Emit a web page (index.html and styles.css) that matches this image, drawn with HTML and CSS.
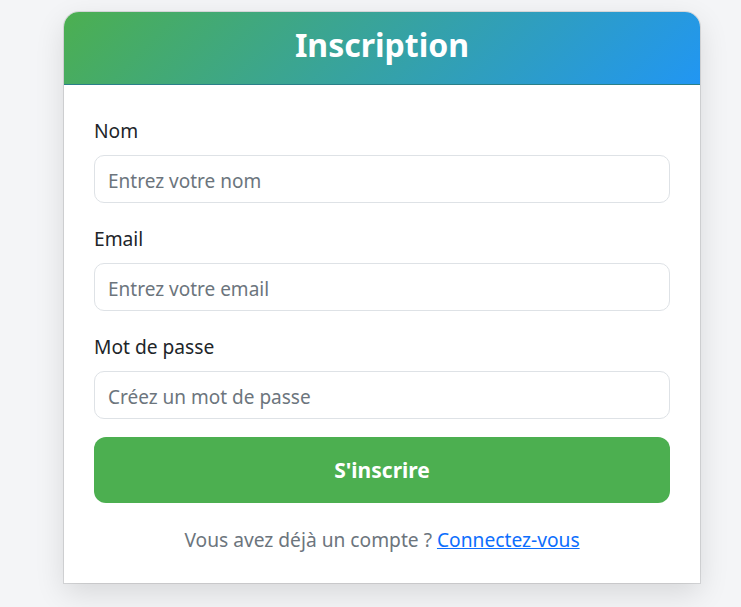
FILE: index.html
```html
<!DOCTYPE html>
<html lang="fr">
<head>
<meta charset="utf-8">
<title>Inscription</title>
<link rel="stylesheet" href="styles.css">
</head>
<body>
<div class="card">
  <div class="card-header">
    <h1 class="title">Inscription</h1>
  </div>
  <form class="card-body">
    <div class="group">
      <label class="label" for="nom">Nom</label>
      <input class="input" id="nom" type="text" placeholder="Entrez votre nom">
    </div>
    <div class="group">
      <label class="label" for="email">Email</label>
      <input class="input" id="email" type="email" placeholder="Entrez votre email">
    </div>
    <div class="group">
      <label class="label" for="pwd">Mot de passe</label>
      <input class="input" id="pwd" type="password" placeholder="Créez un mot de passe">
    </div>
    <button class="btn" type="button">S'inscrire</button>
    <p class="footer">Vous avez déjà un compte ? <a class="link" href="#">Connectez-vous</a></p>
  </form>
</div>
</body>
</html>
```

FILE: styles.css
```css
* { box-sizing: border-box; }
html, body { margin: 0; padding: 0; }
body {
  background: #f4f5f7;
  font-family: "Noto Sans", "Open Sans", sans-serif;
  color: #212529;
  padding-top: 12px;
  height: 607px;
  overflow: hidden;
}
.card {
  margin-left: 64px;
  width: 636px;
  background: #fff;
  border-radius: 15px 15px 0 0;
  box-shadow: 0 0 0 1px rgba(0,0,0,0.1), 0 10px 30px rgba(0,0,0,0.12);
}
.card-header {
  background: linear-gradient(135deg, #4caf50, #2196f3);
  border-radius: 15px 15px 0 0;
  border-bottom: 1px solid #2a7f88;
  padding: 14px 0 20px;
  text-align: center;
}
.title {
  margin: 0;
  color: #fff;
  font-size: 32px;
  font-weight: 700;
  line-height: 38px;
}
.card-body {
  padding: 31px 30px 29px;
  display: flex;
  flex-direction: column;
}
.group {
  display: flex;
  flex-direction: column;
  margin-bottom: 21px;
}
.group:last-of-type { margin-bottom: 18px; }
.label {
  font-size: 19.2px;
  line-height: 29px;
  margin-bottom: 10px;
}
.input {
  height: 48px;
  border: 1px solid #dee2e6;
  border-radius: 10px;
  padding: 3px 13px 0;
  font-family: inherit;
  font-size: 19px;
  color: #212529;
}
.input::placeholder { color: #6c757d; }
.btn {
  height: 66px;
  border: none;
  border-radius: 12px;
  background: #4caf50;
  color: #fff;
  font-family: inherit;
  font-size: 21px;
  font-weight: 700;
}
.footer {
  margin: 22px 0 0;
  text-align: center;
  font-size: 19.2px;
  line-height: 29px;
  color: #6c757d;
}
.link { color: #0d6efd; }
```
